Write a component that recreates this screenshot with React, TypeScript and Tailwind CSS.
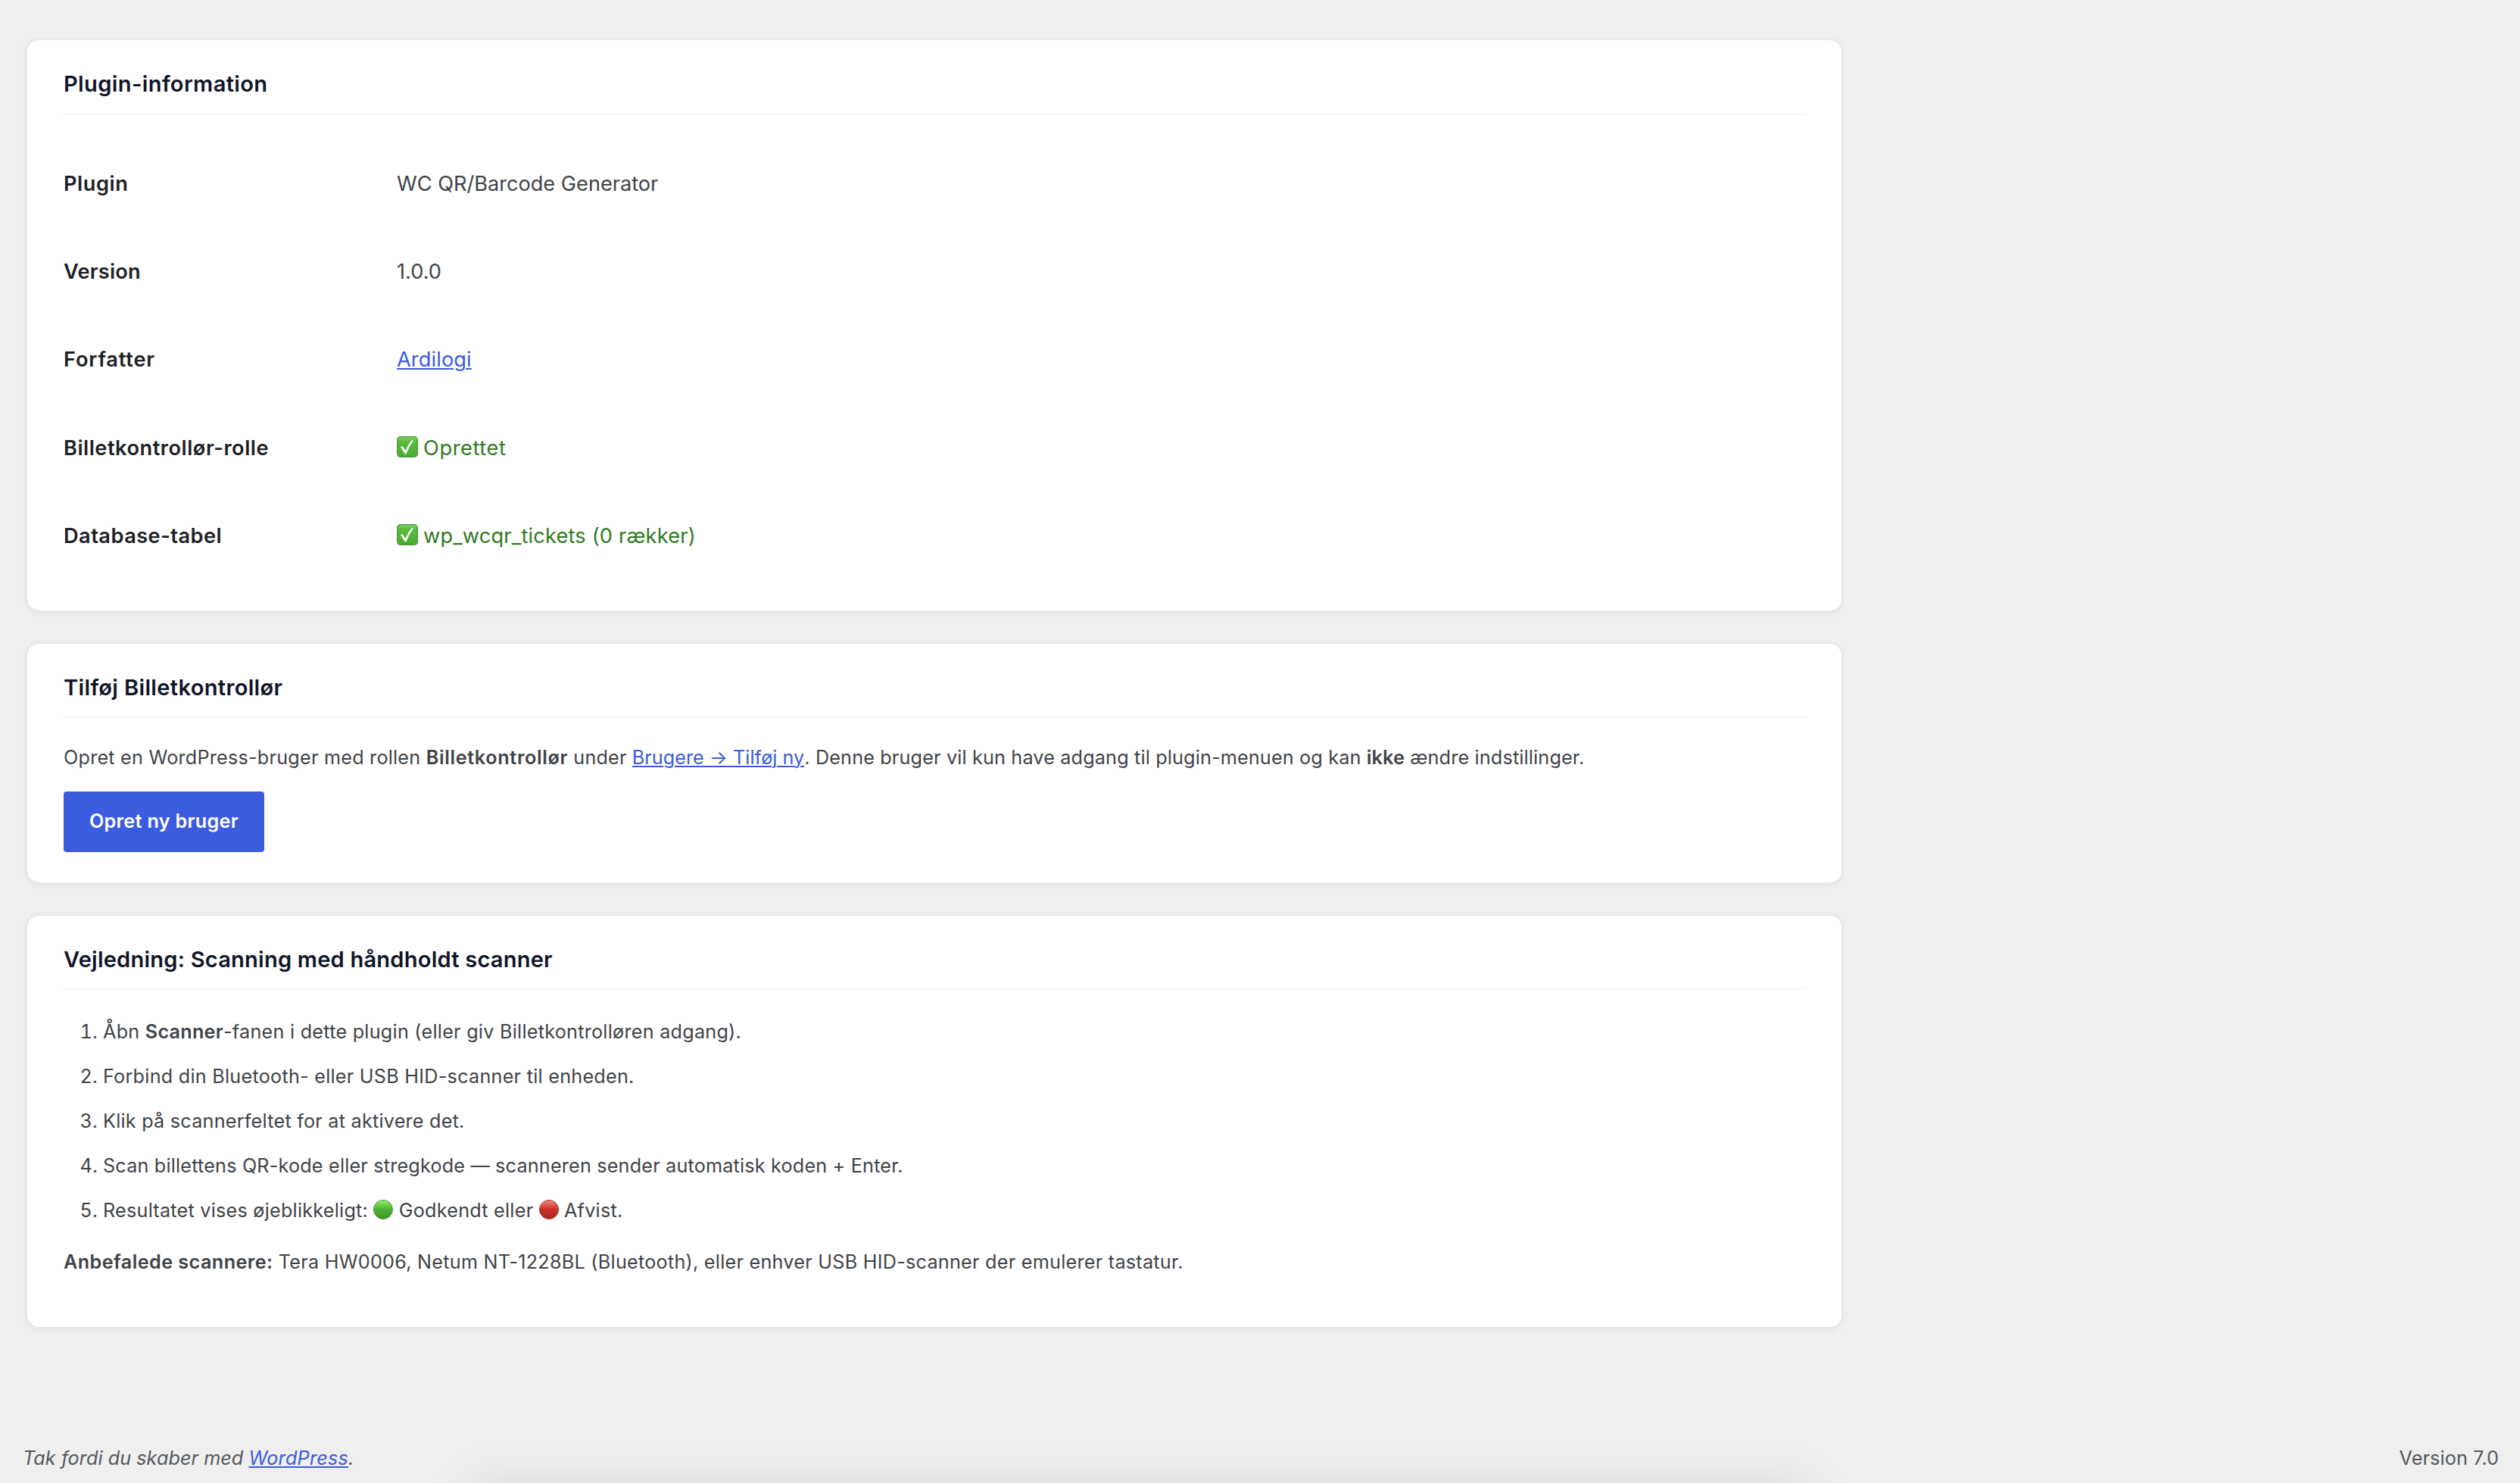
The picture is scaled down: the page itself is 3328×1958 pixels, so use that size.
/* ── Plugin settings: information, ticket inspector and scanner guide ── */

import React from 'react';
import type { ReactNode } from 'react';

interface CardProps {
  title: string;
  titleClass?: string;
  className?: string;
  children: ReactNode;
}

function Card({ title, titleClass = '', className = '', children }: CardProps) {
  return (
    <section
      className={`
        w-[2400px] rounded-[17px] border-2 border-[#e7e7e8] bg-white bg-clip-padding px-12 pt-10
        shadow-[0_2px_6px_rgba(0,0,0,0.05)]
        ${className}
      `}
    >
      <h2
        className={`border-b-2 border-[#f5f5f6] pb-5 text-[29.1px] leading-[36.6px] font-semibold text-[#111528] ${titleClass}`}
      >
        {title}
      </h2>
      {children}
    </section>
  );
}

function CheckIcon() {
  return (
    <svg viewBox="0 0 28 28" className="mr-[7px] inline-block h-7 w-7 align-[-3px]">
      <defs>
        <linearGradient id="check-fill" x1="0" y1="0" x2="0" y2="1">
          <stop offset="0" stopColor="#8ad070" />
          <stop offset="0.2" stopColor="#5cbd40" />
          <stop offset="1" stopColor="#4cab2f" />
        </linearGradient>
      </defs>
      <rect x="0.6" y="0.6" width="26.8" height="26.8" rx="4.2" fill="url(#check-fill)" stroke="#4b9a36" strokeWidth="1.2" />
      <path d="M5 14.2 L7.5 13 L11.6 19 C13.7 13.7 16.2 9.2 19.9 5.2 L22.3 5.2 C18 10.8 14.9 16.7 12.6 23.2 L10.8 23.2 Z" fill="#fff" />
    </svg>
  );
}

interface DotProps {
  id: string;
  top: string;
  middle: string;
  bottom: string;
  edge: string;
}

function Dot({ id, top, middle, bottom, edge }: DotProps) {
  return (
    <svg viewBox="0 0 26 26" className="inline-block h-[26px] w-[26px] align-[-3px]">
      <defs>
        <linearGradient id={id} x1="0" y1="0" x2="0" y2="1">
          <stop offset="0" stopColor={top} />
          <stop offset="0.48" stopColor={middle} />
          <stop offset="1" stopColor={bottom} />
        </linearGradient>
      </defs>
      <circle cx="13" cy="13" r="12.5" fill={`url(#${id})`} stroke={edge} strokeWidth="1" />
    </svg>
  );
}

function Link({ children, className = '' }: { children: ReactNode; className?: string }) {
  return (
    <a
      href="#"
      className={`text-[#3a5bdc] underline decoration-2 underline-offset-2 ${className}`}
    >
      {children}
    </a>
  );
}

const infoRows: { label: string; labelClass: string; value: ReactNode }[] = [
  {
    label: 'Plugin',
    labelClass: 'tracking-[0.02em]',
    value: <span className="tracking-[-0.001em]">WC QR/Barcode Generator</span>,
  },
  {
    label: 'Version',
    labelClass: 'tracking-[0.008em]',
    value: <span>1.0.0</span>,
  },
  {
    label: 'Forfatter',
    labelClass: 'tracking-[0.03em]',
    value: <Link className="tracking-[0.004em]">Ardilogi</Link>,
  },
  {
    label: 'Billetkontrollør-rolle',
    labelClass: 'tracking-[0.019em]',
    value: (
      <span className="tracking-[0.022em] text-[#2f7a1f]">
        <CheckIcon />
        Oprettet
      </span>
    ),
  },
  {
    label: 'Database-tabel',
    labelClass: 'tracking-[0.017em]',
    value: (
      <span className="tracking-[0.007em] text-[#2f7a1f]">
        <CheckIcon />
        wp_wcqr_tickets (0 rækker)
      </span>
    ),
  },
];

export default function App() {
  return (
    <div className="relative flex h-[1958px] w-[3328px] flex-col overflow-hidden bg-[#efefef] pt-[51.4px] font-['Inter',sans-serif] text-[#3f4347]">
      <main className="flex flex-col gap-10 pl-[34px]">
        <Card title="Plugin-information" titleClass="tracking-[0.012em]" className="h-[756.2px]">
          <dl className="mt-[32.4px]">
            {infoRows.map((row) => (
              <div key={row.label} className="flex h-[116.4px] items-center text-[27.2px] leading-[36px]">
                <dt className={`w-[440px] font-semibold text-[#1d2125] ${row.labelClass}`}>{row.label}</dt>
                <dd>{row.value}</dd>
              </div>
            ))}
          </dl>
        </Card>

        <Card title="Tilføj Billetkontrollør" titleClass="tracking-[0.011em]" className="h-[319.1px]">
          <p className="mt-[32.4px] text-[25.2px] leading-[39px] tracking-[0.0065em]">
            <span className="tracking-[0.009em]">Opret en WordPress-bruger med rollen </span>
            <strong className="font-semibold tracking-[0.026em]">Billetkontrollør</strong> under{' '}
            <Link className="tracking-[0.001em]">Brugere → Tilføj ny</Link>. Denne bruger vil kun have adgang til
            plugin-menuen og kan <strong className="font-semibold">ikke</strong> ændre indstillinger.
          </p>
          <button className="mt-[25.3px] flex h-20 w-[265px] items-center justify-center rounded bg-[#3c5ce0] text-[25.2px] font-[560] tracking-[0.012em] text-white">
            Opret ny bruger
          </button>
        </Card>

        <Card
          title="Vejledning: Scanning med håndholdt scanner"
          titleClass="tracking-[0.0067em]"
          className="h-[547.3px]"
        >
          <ol className="mt-[26.2px] list-decimal pl-[52px] text-[25.2px] leading-[59px] tracking-[0.01em]">
            <li>
              Åbn <strong className="font-semibold">Scanner</strong>-fanen i dette plugin (eller giv Billetkontrolløren
              adgang).
            </li>
            <li>Forbind din Bluetooth- eller USB HID-scanner til enheden.</li>
            <li className="tracking-[0.0092em]">Klik på scannerfeltet for at aktivere det.</li>
            <li className="tracking-[0.0075em]">
              Scan billettens QR-kode eller stregkode — scanneren sender automatisk koden + Enter.
            </li>
            <li className="h-[59px] tracking-[0.0094em]">
              Resultatet vises øjeblikkeligt:{' '}
              <Dot id="dot-green" top="#8df56f" middle="#4fb233" bottom="#43902c" edge="#4a9636" /> Godkendt eller{' '}
              <Dot id="dot-red" top="#f58a80" middle="#cb3128" bottom="#a02a22" edge="#a8362e" /> Afvist.
            </li>
          </ol>
          <p className="mt-[19px] text-[25.2px] leading-[39px] tracking-[0.01em]">
            <strong className="font-semibold tracking-[0.017em]">Anbefalede scannere:</strong> Tera HW0006, Netum
            NT-1228BL (Bluetooth), eller enhver USB HID-scanner der emulerer tastatur.
          </p>
        </Card>
      </main>

      <footer className="mt-auto flex justify-between pr-7 pb-[13.5px] pl-[30px] text-[25.2px] leading-[39px] text-[#54585c]">
        <p className="tracking-[0.002em] italic">
          Tak fordi du skaber med <Link className="tracking-[0.01em]">WordPress</Link>.
        </p>
        <p className="tracking-[0.004em]">Version 7.0</p>
      </footer>

      {/* Soft shadow rising from below the page edge */}
      <div className="pointer-events-none absolute top-full left-[620px] h-40 w-[1770px] shadow-[0_4px_66px_rgba(0,0,0,0.1)]" />
    </div>
  );
}
